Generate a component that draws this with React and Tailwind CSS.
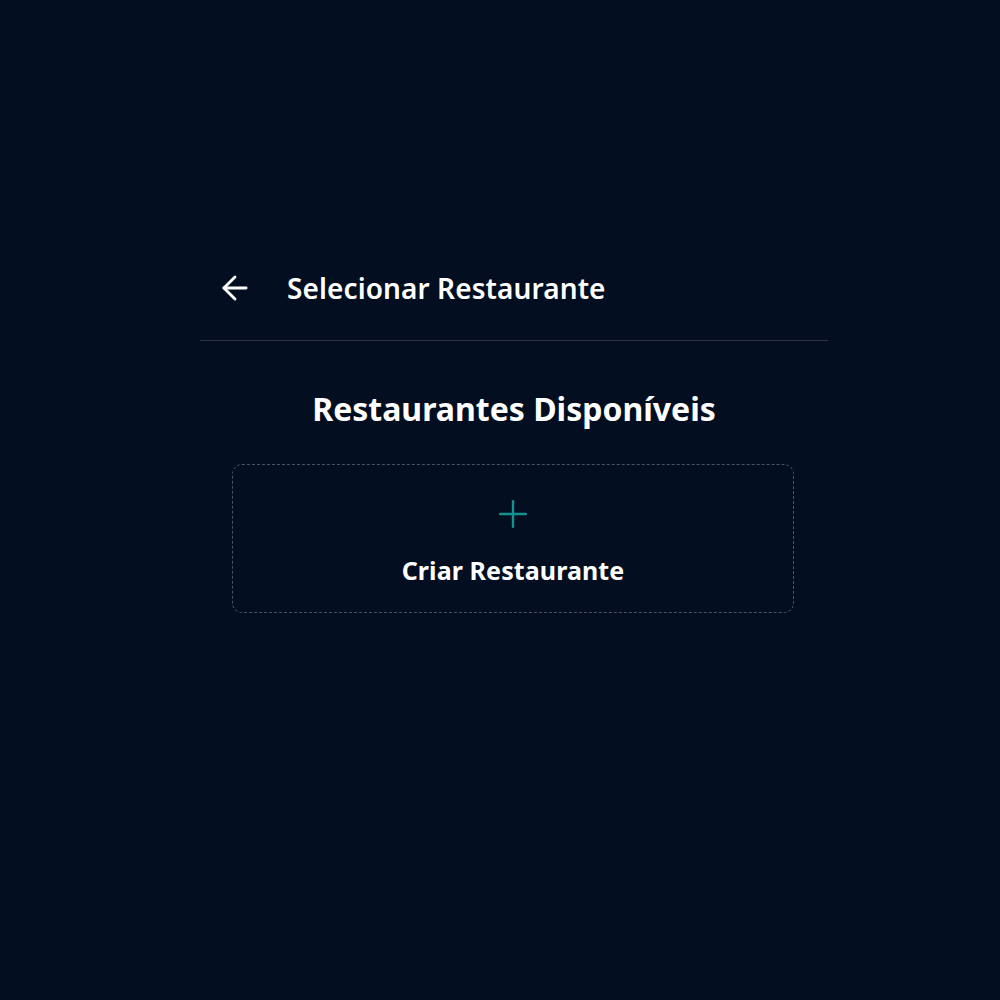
import { ArrowLeft, Plus } from 'lucide-react';

export default function App() {
  return (
    <div
      className="min-h-screen w-full bg-[#030f20] text-white"
      style={{ fontFamily: '"Noto Sans", "Open Sans", sans-serif' }}
    >
      <div className="ml-[200px] w-[628px] pt-[266px]">
        <header className="flex items-center gap-[33px] border-b border-[#2a3140] pb-[30px] pl-[16px]">
          <ArrowLeft size={38} strokeWidth={1.8} className="text-white" />
          <h1 className="text-[28px] font-semibold leading-[44px] tracking-[0.1px]">Selecionar Restaurante</h1>
        </header>

        <main className="px-[32px] pt-[48px]">
          <h2 className="text-center text-[32px] font-bold leading-[40px]">Restaurantes Disponíveis</h2>

          <button
            type="button"
            className="mt-[35px] flex h-[149px] w-[562px] flex-col items-center rounded-[10px] border border-dashed border-[#4a5363] pt-[27px]"
          >
            <Plus size={44} strokeWidth={1.3} className="text-[#12938f]" />
            <span className="mt-[19px] text-[25px] font-bold leading-[30px] tracking-[0.1px]">Criar Restaurante</span>
          </button>
        </main>
      </div>
    </div>
  );
}
